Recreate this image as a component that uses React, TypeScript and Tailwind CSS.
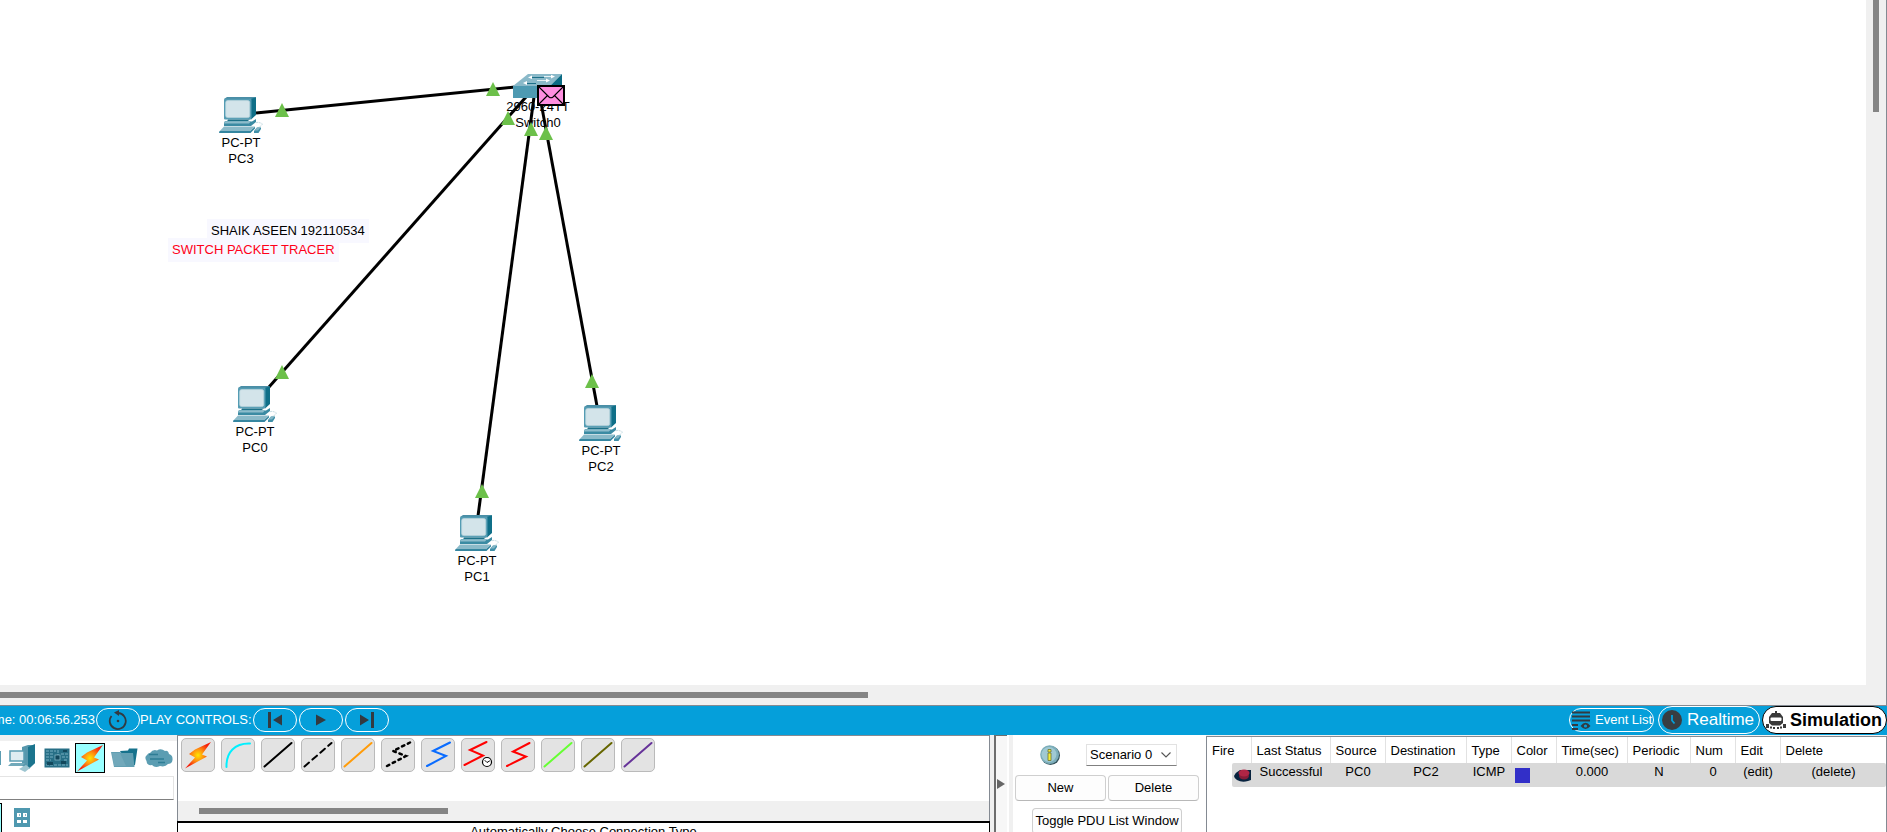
import React from "react";

type Pc = { name: string; place: string };

const pcs: Pc[] = [
  { name: "PC3", place: "left-[219px] top-[97px]" },
  { name: "PC0", place: "left-[233px] top-[386px]" },
  { name: "PC2", place: "left-[579px] top-[405px]" },
  { name: "PC1", place: "left-[455px] top-[515px]" },
];

const links = [
  [256, 113, 515, 87],
  [269, 387, 526, 97],
  [478, 516, 534, 97],
  [597, 406, 540, 97],
];

// Apex of each link status marker
const markers = [
  [282, 103],
  [493, 82],
  [508, 111],
  [531, 122],
  [546, 126],
  [282, 365],
  [592, 374],
  [482, 484],
];

function PcIcon() {
  return (
    <svg width="44" height="36" viewBox="0 0 44 36" className="block" aria-hidden="true">
      <path d="M5 2 8 0H37L33 2.5Z" fill="#4a8ea6" />
      <path d="M32 2 37 0V18L32 22.5Z" fill="#0f6f88" />
      <rect x="5" y="1.8" width="27.5" height="20.7" rx="1" fill="#549cb3" />
      <rect x="6.7" y="3.6" width="24" height="17" rx="2" fill="#d3e4ea" stroke="#b7d3dc" strokeWidth=".8" />
      <path d="M9 22.5H31L28 24.5H8Z" fill="#1c7188" />
      <path d="M6 24 33 24.5 37 22V25L32 29H5V26Z" fill="#3b8ba3" />
      <path d="M6 24.2H32L30 26.5H5Z" fill="#8dbccb" />
      <path d="M5 29.5H36L31 34H0.8Z" fill="#8bbac9" />
      <path d="M0.5 34H31L36 29.8V31.5L31.5 36H0Z" fill="#3586a0" />
      <path d="M37 26Q38 24.5 43 26.5Q44 28.5 39 30.5" fill="none" stroke="#bdd6dd" strokeWidth="1" strokeDasharray="2 1" />
      <path d="M35 34 38 30.5H42V32L39.5 36H35Z" fill="#3f8fa8" />
      <path d="M35.5 33.5 38 30.5H41.5L39 33.5Z" fill="#82b5c5" />
    </svg>
  );
}

function PcNode({ pc }: { pc: Pc }) {
  return (
    <div className={"absolute w-11 " + pc.place}>
      <PcIcon />
      <div className="mt-0.5 flex flex-col items-center whitespace-nowrap leading-4">
        <span>PC-PT</span>
        <span>{pc.name}</span>
      </div>
    </div>
  );
}

function Workspace() {
  return (
    <main className="relative min-w-0 flex-1 overflow-hidden bg-white">
      <p className="absolute left-[168px] top-[238px] bg-[#f8f8ff] px-1 leading-6 whitespace-nowrap text-[#ff0018]">
        SWITCH PACKET TRACER
      </p>
      <p className="absolute left-[207px] top-[219px] bg-[#f8f8ff] px-1 leading-6 whitespace-nowrap">
        SHAIK ASEEN 192110534
      </p>
      <div className="absolute left-[498px] top-[99px] flex w-20 flex-col items-center leading-4 whitespace-nowrap">
        <span>2960-24TT</span>
        <span>Switch0</span>
      </div>
      <svg className="absolute left-0 top-0" width="700" height="600" aria-hidden="true">
        {links.map(([x1, y1, x2, y2]) => (
          <line key={x1} x1={x1} y1={y1} x2={x2} y2={y2} stroke="#000" strokeWidth="3" />
        ))}
        {markers.map(([x, y]) => (
          <path key={x + "-" + y} d={`M${x} ${y}l7 14h-14z`} fill="#6cc04a" />
        ))}
      </svg>
      {pcs.map((pc) => (
        <PcNode key={pc.name} pc={pc} />
      ))}
      <svg className="absolute left-[513px] top-[74px]" width="49" height="24" viewBox="0 0 49 24" aria-hidden="true">
        <path d="M0 12 15 0H49L37 12Z" fill="#8ab9c9" />
        <path d="M37 12 49 0V11L37 24Z" fill="#0b6b84" />
        <rect y="12" width="37" height="12" fill="#4e9ab2" />
        <g fill="none" stroke="#1d6f88" strokeWidth="1">
          <path d="M19 3.5H31M12 9.500H23" />
        </g>
        <g fill="none" stroke="#e6f1f4" strokeWidth="1">
          <path d="M31 2.500H39M24 6.500H33" />
        </g>
        <g fill="#fff">
          <path d="M15 3.500 19 1.500V5ZM42 2.500 38 .8V4.500ZM10 9 14 7V11ZM37 6.500 33 4.500V8.500Z" />
        </g>
      </svg>
      <svg className="absolute left-[537px] top-[85px]" width="28" height="21" viewBox="0 0 28 21" aria-hidden="true">
        <rect x="1" y="1" width="26" height="19" fill="#ff8fe0" stroke="#000" strokeWidth="2" />
        <path d="M2 2 12 12Q14 13.500 16 12L26 2M2 19 10.500 10.500M26 19 17.500 10.500" fill="none" stroke="#000" strokeWidth="1.100" />
      </svg>
    </main>
  );
}

function Pill({ label, children }: { label: string; children: React.ReactNode }) {
  return (
    <button aria-label={label} className="flex h-6 w-11 items-center justify-center rounded-full border border-white">
      <svg width="30" height="20" viewBox="0 0 30 20" aria-hidden="true" fill="#333a40">
        {children}
      </svg>
    </button>
  );
}

function ControlBar() {
  return (
    <div className="flex h-[30px] shrink-0 items-center border-t border-[#848a92] bg-[#059fda] pb-px text-white">
      <div className="flex w-24 justify-end overflow-hidden pr-px whitespace-nowrap">
        <span>Time: 00:06:56.253</span>
      </div>
      <Pill label="Power cycle devices">
        <path d="M8.500 6A8 8 0 1 0 15 3" fill="none" stroke="#333a40" strokeWidth="1.800" />
        <path d="M11 2.500 16 0V6Z" />
        <circle cx="15" cy="11" r="1.300" />
      </Pill>
      <span className="w-[113px] whitespace-nowrap">PLAY CONTROLS:</span>
      <div className="flex gap-0.5">
        <Pill label="Go back to previous event">
          <path d="M8 2h3v16H8zM13 10 22 4.500V15.500Z" />
        </Pill>
        <Pill label="Play">
          <path d="M10 4.500 20 10 10 15.500Z" />
        </Pill>
        <Pill label="Capture then forward">
          <path d="M8 4.500 17 10 8 15.500ZM19 2h3v16h-3z" />
        </Pill>
      </div>
      <div className="ml-auto flex items-center">
        <button className="mr-1 flex h-6 w-[85px] items-center gap-1 rounded-full border border-white pl-px whitespace-nowrap">
          <svg width="20" height="20" viewBox="0 0 20 20" className="shrink-0" aria-hidden="true">
            <path d="M1 2.500H19M1 6.500H19M1 10.500H19M1 15H7M1 19H7" stroke="#333a40" strokeWidth="1.800" />
            <path d="M9.500 16Q14.500 9.500 19.500 16Q14.500 22 9.500 16Z" fill="#333a40" />
            <circle cx="14.500" cy="16" r="1.600" fill="#059fda" />
          </svg>
          Event List
        </button>
        <button className="mr-0.5 flex h-7 w-[102px] items-center gap-[5px] rounded-full border border-white pl-[3px] text-[17px]">
          <svg width="20" height="20" viewBox="0 0 20 20" className="shrink-0" aria-hidden="true">
            <circle cx="10" cy="10" r="10" fill="#383d42" />
            <path d="M10 5V10.500L12.500 13.500" fill="none" stroke="#059fda" strokeWidth="1.800" />
          </svg>
          Realtime
        </button>
        <button className="flex h-7 w-[125px] items-center gap-1 rounded-full border border-black bg-white pl-[3px] text-[18px] font-bold text-black">
          <svg width="20" height="20" viewBox="0 0 20 20" className="shrink-0" fill="#3a3a3a" aria-hidden="true">
            <path d="M9 1h2v2h3l3 4v6l-3 2.500H6L3 13V7l3-4h3z" />
            <rect x="4.500" y="7.500" width="11" height="3.500" rx="1" fill="#fff" />
            <path d="M0 14h3v4H0zM4 16.500h2v2H4zM7 17h2v2H7zM11 17h2v2h-2zM14 16.500h2v2h-2zM17 14h3v4h-3z" />
          </svg>
          Simulation
        </button>
      </div>
    </div>
  );
}

function Bolt({ id }: { id: string }) {
  return (
    <svg width="28" height="28" viewBox="0 0 28 28" aria-hidden="true">
      <defs>
        <radialGradient id={id} cx=".5" cy=".5" r=".5">
          <stop offset="0" stopColor="#ffe600" />
          <stop offset=".45" stopColor="#ff9010" />
          <stop offset="1" stopColor="#f5200c" />
        </radialGradient>
      </defs>
      <path d="M27 1 18 13.500 23 15.500 1 27.500 11 16.500 5 13 11 8.500Z" fill={"url(#" + id + ")"} />
    </svg>
  );
}

function EndDeviceIcon() {
  return (
    <svg width="28" height="28" viewBox="0 0 28 28" aria-hidden="true">
      <path d="M14 3 20 1H27V19L21 25 14 22Z" fill="#5798ad" />
      <path d="M20 3 27 0V19L20 25Z" fill="#1b748d" />
      <path d="M2 7H16V17H2Z" fill="#e0edf1" stroke="#5b9db2" strokeWidth="1.500" />
      <path d="M3 19H17L14 22H0Z" fill="#71a9ba" />
      <path d="M11 25 18 21 22 24 17 28Z" fill="#9dc5d0" />
    </svg>
  );
}

function BoardIcon() {
  return (
    <svg width="26" height="20" viewBox="0 0 26 20" aria-hidden="true">
      <rect x=".5" y=".5" width="25" height="19" fill="#276f86" />
      <path d="M2 3H12M2 6H9M2 9H9M2 12H7M14 2V7M17 6H24M18 9H24M20 12H24M2 17H24" stroke="#79b0c1" strokeWidth="1" strokeDasharray="3 1" />
      <rect x="11" y="7" width="5" height="5" fill="#12485c" stroke="#8cc0ce" strokeWidth=".7" />
      <path d="M3 14h6v3H3zM17 13h5v3h-5zM19 2h4v2h-4z" fill="#12485c" />
    </svg>
  );
}

function FolderIcon() {
  return (
    <svg width="27" height="20" viewBox="0 0 27 20" aria-hidden="true">
      <path d="M9 3 17 2.500 18 .5H26.500L24 17 18 19Z" fill="#16728c" />
      <path d="M0 4H9L11 5H22L23.500 19H3Z" fill="#629fb2" />
      <path d="M1 5H9L15 18H3Z" fill="#80b2c2" opacity=".5" />
    </svg>
  );
}

function CloudIcon() {
  return (
    <svg width="28" height="19" viewBox="0 0 28 19" aria-hidden="true">
      <path d="M5 4Q8 0 12 1.500Q16-1 20 2Q23 1 24 5Q28 6 27.500 11Q27 15 23 15Q20 18.500 15 17Q10 19.500 7 16Q2 17 1.500 12Q-1 8 2 6Q3 4 5 4Z" fill="#5b9db2" />
      <path d="M4 5.500H13M5 10H19M13 13.500H20" stroke="#2e7d95" strokeWidth="1.500" />
    </svg>
  );
}

function DevicePanel() {
  return (
    <section className="flex w-[177px] shrink-0 flex-col border-t-[6px] border-[#f0f0f0] bg-white">
      <div className="flex h-[34px] items-center">
        <span className="h-3.5 w-px bg-[#5b9db2]" />
        <button aria-label="End Devices" className="ml-[7px] w-7"><EndDeviceIcon /></button>
        <button aria-label="Components" className="ml-2 w-[26px]"><BoardIcon /></button>
        <button aria-label="Connections" className="ml-[5px] flex size-[30px] items-center justify-center border border-black bg-[#99ffff]">
          <Bolt id="bolt-category" />
        </button>
        <button aria-label="Miscellaneous" className="ml-1.5 w-[27px]"><FolderIcon /></button>
        <button aria-label="Multiuser Connection" className="ml-[7px] w-7"><CloudIcon /></button>
      </div>
      <input
        aria-label="Search devices"
        className="mt-px mr-[3px] h-6 shrink-0 border border-l-0 border-[#e4e4e4] border-b-[#808080] bg-white outline-none"
      />
      <div className="mt-[3px] flex h-[29px] items-start">
        <span className="h-full w-0.5 border-t border-r border-black bg-[#99ffff]" />
        <button aria-label="Structured cabling" className="mt-[5px] ml-3">
          <svg width="16" height="19" viewBox="0 0 16 19" aria-hidden="true">
            <rect width="16" height="19" fill="#4f98af" />
            <path d="M3 5h4v4H3zM9 5h4v4H9zM3 12h4v3H3zM9 12h4v3H9z" fill="#fff" />
            <path d="M5 6h1v2H5zM11 6h1v2h-1z" fill="#8cbac8" />
          </svg>
        </button>
      </div>
    </section>
  );
}

const zigzag = "M6 28 25 18 12 13 29 4.500";

const cables: { name: string; art: React.ReactNode }[] = [
  { name: "Console", art: <path d="M5.500 29C5 14 14 5 29 5.500" stroke="#00f0ff" /> },
  { name: "Copper Straight-Through", art: <path d="M3.500 28.500 30.500 5" stroke="#000" /> },
  { name: "Copper Cross-Over", art: <path d="M3.500 28.500 30.500 5" stroke="#000" strokeDasharray="6 4.500" /> },
  { name: "Fiber", art: <path d="M3.500 28.500 30.500 5" stroke="#ff9c0a" /> },
  { name: "Phone", art: <path d={zigzag} stroke="#000" strokeDasharray="2.500 4" strokeWidth="2.500" /> },
  { name: "Coaxial", art: <path d={zigzag} stroke="#0a6cff" /> },
  {
    name: "Serial DCE",
    art: (
      <>
        <path d="M3.500 27 22 17.500 9 12 25.500 4" stroke="#f00" />
        <circle cx="26" cy="24" r="4.500" fill="#fff" stroke="#000" strokeWidth="1.200" />
        <path d="M24 22.500 26 24.500 28.500 23" stroke="#000" strokeWidth="1" />
      </>
    ),
  },
  { name: "Serial DTE", art: <path d="M6 28 25 18.500 12 13.500 28.500 5" stroke="#f00" /> },
  { name: "Octal", art: <path d="M3.500 28.500 30.500 5" stroke="#66ff33" /> },
  { name: "IoE Custom Cable", art: <path d="M3.500 28.500 30.500 5" stroke="#666600" /> },
  { name: "USB", art: <path d="M3.500 28.500 30.500 5" stroke="#663399" /> },
];

const tile = "flex size-[34px] shrink-0 items-center justify-center rounded-[5px] border border-[#bababa] bg-[#e3e3e3]";

function CablePanel() {
  return (
    <section className="flex w-[813px] shrink-0 flex-col border-x border-t border-[#848a92] bg-white">
      <div className="flex h-[65px] shrink-0 items-start gap-1.5 pt-0.5 pl-[3px]">
        <button aria-label="Automatically Choose Connection Type" className={tile}>
          <Bolt id="bolt-auto" />
        </button>
        {cables.map((c) => (
          <button key={c.name} aria-label={c.name} className={tile}>
            <svg width="34" height="34" viewBox="0 0 34 34" className="shrink-0" fill="none" strokeWidth="2" strokeLinecap="round" aria-hidden="true">
              {c.art}
            </svg>
          </button>
        ))}
      </div>
      <div className="flex h-5 shrink-0 items-center bg-[#f0f0f0] pl-[21px]">
        <div className="h-1.5 w-[249px] bg-[#858585]" />
      </div>
      <div className="-mx-px flex-1 overflow-hidden border-x border-t-2 border-black pt-px text-center leading-4">
        Automatically Choose Connection Type
      </div>
    </section>
  );
}

const pushButton = "h-[26px] rounded-[4px] border border-[#cfcfcf] border-b-[#b8b8b8] bg-[#fdfdfd] whitespace-nowrap";

function ScenarioPanel() {
  return (
    <section className="w-[193px] shrink-0 overflow-hidden bg-white pt-[9px] pl-0.5">
      <div className="flex items-center">
        <svg width="20" height="20" viewBox="0 0 20 20" className="ml-[25px]" aria-hidden="true">
          <circle cx="10.500" cy="10.500" r="9.500" fill="#36535c" />
          <circle cx="9.600" cy="9.700" r="9.400" fill="#7badb9" />
          <circle cx="9" cy="9.500" r="7.500" fill="#a0c9d3" />
          <path d="M8 4.500h3V7H8zM8 8h3v7.500H8z" fill="#f5ee3c" stroke="#6f7430" strokeWidth=".8" />
        </svg>
        <div className="relative ml-[26px]">
          <select
            aria-label="Scenario"
            className="block h-[22px] w-[91px] appearance-none border border-[#e2e2e2] border-b-[#808080] bg-white pl-[3px] outline-none"
          >
            <option>Scenario 0</option>
          </select>
          <svg width="10" height="6" viewBox="0 0 10 6" className="pointer-events-none absolute top-2 right-1.5" aria-hidden="true">
            <path d="M.5.500 5 5 9.500.5" fill="none" stroke="#555" strokeWidth="1.100" />
          </svg>
        </div>
      </div>
      <div className="mt-[9px] flex gap-0.5">
        <button className={pushButton + " w-[91px]"}>New</button>
        <button className={pushButton + " w-[91px]"}>Delete</button>
      </div>
      <button className={pushButton + " mt-[7px] ml-[17px] w-[150px]"}>Toggle PDU List Window</button>
    </section>
  );
}

const columns = [
  { title: "Fire", width: "w-[44px]" },
  { title: "Last Status", width: "w-[79px]" },
  { title: "Source", width: "w-[55px]" },
  { title: "Destination", width: "w-[81px]" },
  { title: "Type", width: "w-[45px]" },
  { title: "Color", width: "w-[45px]" },
  { title: "Time(sec)", width: "w-[71px]" },
  { title: "Periodic", width: "w-[63px]" },
  { title: "Num", width: "w-[45px]" },
  { title: "Edit", width: "w-[45px]" },
  { title: "Delete", width: "w-auto" },
];

const cell = "h-6 bg-[#d9d9d9] p-0 pb-1.5 pl-px text-center leading-4 whitespace-nowrap";

function PduTable() {
  return (
    <section className="mt-px min-w-0 flex-1 overflow-hidden border-x border-t border-[#848a92] bg-white">
      <table className="w-full table-fixed border-collapse">
        <thead>
          <tr className="h-[26px]">
            {columns.map((c) => (
              <th
                key={c.title}
                className={"border-r border-[#e2e2e2] p-0 pt-0.5 pl-[5px] text-left font-normal whitespace-nowrap last:border-r-0 " + c.width}
              >
                {c.title}
              </th>
            ))}
          </tr>
        </thead>
        <tbody>
          <tr>
            <td className="h-6 p-0">
              <div className="ml-[25px] flex h-6 items-center rounded-l-[2px] bg-[#d9d9d9] pl-0.5">
                <svg width="17" height="13" viewBox="0 0 17 13" className="shrink-0" aria-label="Fire">
                  <path d="M0 7Q2 3 6 1H17V11L14 12Q8 14 3 11Q0 9 0 7Z" fill="#08233f" />
                  <ellipse cx="10" cy="7" rx="5" ry="3.500" fill="#861c38" />
                  <ellipse cx="10" cy="4" rx="5.500" ry="3.500" fill="#b02545" />
                </svg>
              </div>
            </td>
            <td className={cell}>Successful</td>
            <td className={cell}>PC0</td>
            <td className={cell}>PC2</td>
            <td className={cell}>ICMP</td>
            <td className="h-6 bg-[#d9d9d9] p-0 pl-1">
              <div className="size-[15px] bg-[#322fc8]" />
            </td>
            <td className={cell}>0.000</td>
            <td className={cell}>N</td>
            <td className={cell}>0</td>
            <td className={cell}>(edit)</td>
            <td className={cell + " rounded-r-[2px]"}>(delete)</td>
          </tr>
        </tbody>
      </table>
    </section>
  );
}

export default function App() {
  return (
    <div className="flex h-screen flex-col overflow-hidden bg-[#f0f0f0] font-['Liberation_Sans',Arial,sans-serif] text-[13px] leading-4 text-black">
      <div className="flex min-h-0 flex-1 flex-col border-r border-[#848a92]">
        <div className="flex min-h-0 flex-1">
          <Workspace />
          <div className="flex w-5 shrink-0 justify-center">
            <div className="h-28 w-1.5 bg-[#858585]" />
          </div>
        </div>
        <div className="flex h-5 shrink-0 items-center">
          <div className="h-1.5 w-[46%] bg-[#858585]" />
        </div>
      </div>
      <ControlBar />
      <div className="flex h-[97px] shrink-0">
        <DevicePanel />
        <CablePanel />
        <div className="ml-1 flex w-[13px] shrink-0 items-center border-t border-l-2 border-[#6e6e6e] bg-[#f7f7f7] pl-px">
          <button aria-label="Collapse panel">
            <svg width="8" height="10" viewBox="0 0 8 10" className="block" aria-hidden="true">
              <path d="M0 0 8 5 0 10Z" fill="#666" />
            </svg>
          </button>
        </div>
        <div className="w-1.5 shrink-0 border-l-2 border-white bg-[#f0f0f0]" />
        <ScenarioPanel />
        <PduTable />
      </div>
    </div>
  );
}
